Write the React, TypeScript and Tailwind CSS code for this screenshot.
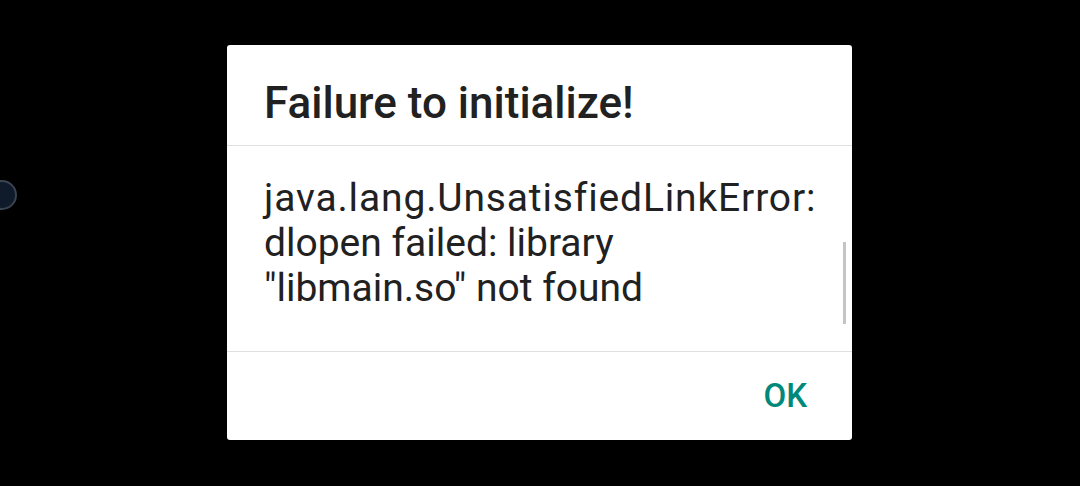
export default function App() {
  return (
    <div className="relative flex h-[486px] w-[1080px] items-start justify-center overflow-hidden bg-black font-['Roboto',sans-serif]">
      <div className="absolute left-[-13px] top-[180px] size-[30px] rounded-full border-2 border-[#3a4350] bg-[#0f1a2a]" />
      <div className="mt-[45px] ml-[-1px] flex w-[625px] flex-col rounded-[3px] bg-white">
        <div className="h-[100px] px-[37px] pt-[33px]">
          <h1 className="text-[44px] font-medium leading-[50px] text-[#212121]">
            Failure to initialize!
          </h1>
        </div>
        <div className="h-px bg-[#e0e0e0]" />
        <div className="relative h-[205px] px-[37px] pt-[30px]">
          <p className="text-[39px] leading-[45px] text-[#212121]">
            <span className="tracking-[0.85px]">java.lang.UnsatisfiedLinkError:</span>
            <br />
            dlopen failed: library
            <br />
            "libmain.so" not found
          </p>
          <div className="absolute right-[6px] top-[96px] h-[82px] w-[3px] bg-[#c4c4c4]" />
        </div>
        <div className="h-px bg-[#e0e0e0]" />
        <div className="flex h-[88px] items-center justify-end pr-[45px]">
          <span className="text-[33px] font-medium text-[#00897b]">OK</span>
        </div>
      </div>
    </div>
  );
}
